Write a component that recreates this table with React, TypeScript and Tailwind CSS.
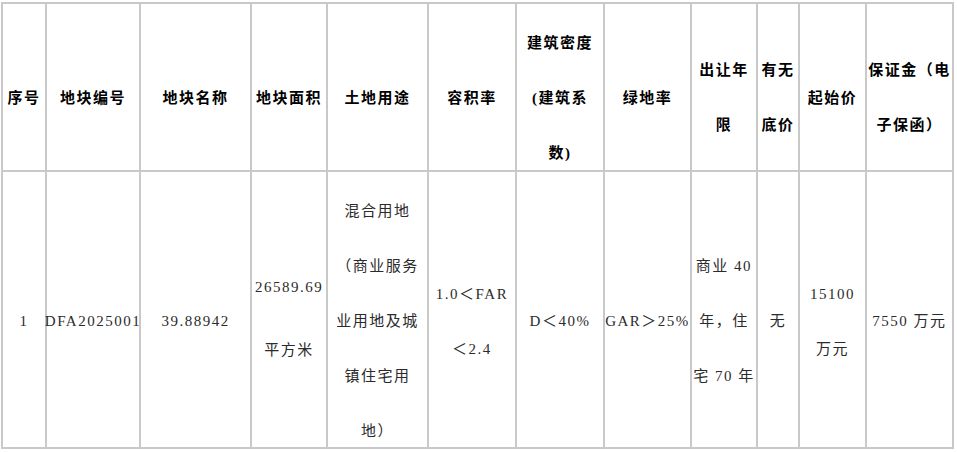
const cols = "grid-cols-[42px_92px_109px_74px_99px_86px_86px_85px_64px_40px_65px_85px]";

const head: React.ReactNode[] = [
  "序号",
  "地块编号",
  "地块名称",
  "地块面积",
  "土地用途",
  "容积率",
  <>建筑密度<br />(建筑系<br />数)</>,
  "绿地率",
  <>出让年<br />限</>,
  <>有无<br />底价</>,
  "起始价",
  <>保证金（电<br />子保函）</>,
];

export default function App() {
  return (
    <div className="min-h-screen bg-white pl-[1px] pt-[2px]">
      <div
        className={`grid ${cols} grid-rows-[166px_275px] gap-[2px] bg-[#c9c9c9] p-[2px] w-max text-[15px] tracking-[1.5px] whitespace-nowrap font-['Tinos','Liberation_Serif','Times_New_Roman','DejaVu_Serif','Noto_Sans_CJK_SC',serif]`}
      >
        {head.map((h, i) => (
          <div key={i} className="bg-white flex items-center justify-center text-center pt-[22px] leading-[55px] font-bold text-black">
            <div>{h}</div>
          </div>
        ))}

        <Cell>1</Cell>
        <Cell>DFA2025001</Cell>
        <Cell>39.88942</Cell>
        <div className="bg-white flex items-center justify-center text-center pt-[18px] leading-[63px] text-[#2b2b2b]">
          <div>26589.69<br />平方米</div>
        </div>
        <Cell>混合用地<br />（商业服务<br />业用地及城<br />镇住宅用<br />地）</Cell>
        <Cell>1.0＜FAR<br />＜2.4</Cell>
        <Cell>D＜40%</Cell>
        <Cell>GAR＞25%</Cell>
        <Cell>商业 40<br />年，住<br />宅 70 年</Cell>
        <Cell>无</Cell>
        <Cell>15100<br />万元</Cell>
        <Cell>7550 万元</Cell>
      </div>
    </div>
  );
}

function Cell({ children }: { children: React.ReactNode }) {
  return (
    <div className="bg-white flex items-center justify-center text-center pt-[24px] leading-[55px] text-[#2b2b2b]">
      <div>{children}</div>
    </div>
  );
}
